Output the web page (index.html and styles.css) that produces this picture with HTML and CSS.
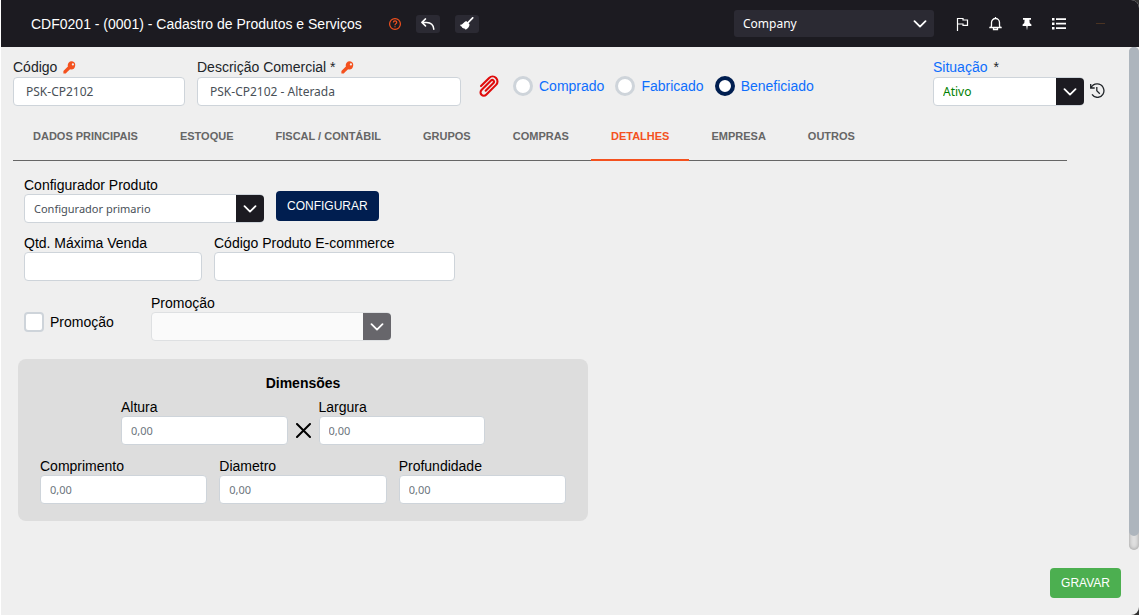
FILE: index.html
```html
<!DOCTYPE html>
<html lang="pt-BR">
<head>
<meta charset="utf-8">
<title>CDF0201 - Cadastro de Produtos e Serviços</title>
<link rel="stylesheet" href="styles.css">
</head>
<body>
<svg class="sprite" aria-hidden="true">
  <symbol id="chevron" viewBox="0 0 14 8"><path d="M1.5 1.2 7 6.6l5.500-5.400" fill="none" stroke="currentColor" stroke-width="1.800" stroke-linecap="round" stroke-linejoin="round"/></symbol>
  <symbol id="key" viewBox="0 0 13 13"><path fill="currentColor" fill-rule="evenodd" d="M9 .3a4 4 0 0 0-4.100 5.100L.4 10v2.600h2.400l1.300-1.500 3-2.800A4 4 0 1 0 9 .3zm.9 2a1.100 1.100 0 1 1 0 2.200 1.100 1.100 0 0 1 0-2.200z"/></symbol>
</svg>
<div class="window">
  <header class="topbar">
    <h1 class="topbar-title">CDF0201 - (0001) - Cadastro de Produtos e Serviços</h1>
    <button class="icon-btn help" type="button" aria-label="Ajuda">
      <svg width="12" height="12" viewBox="0 0 12 12" fill="none" stroke="currentColor" stroke-width="1.200"><circle cx="6" cy="6" r="5.400"/><path d="M4.400 4.600C4.400 2.400 7.700 2.500 7.700 4.400 7.700 5.700 6 5.600 6 7.200M6 8.300v1"/></svg>
    </button>
    <button class="tool-btn back" type="button" aria-label="Voltar">
      <svg width="14" height="12" viewBox="0 0 14 12" fill="none" stroke="currentColor" stroke-width="1.500" stroke-linecap="round" stroke-linejoin="round"><path d="M4.500.9.9 4.400l3.600 3.500M1.200 4.400h4.300c4.200 0 7 2.300 7.300 6.800"/></svg>
    </button>
    <button class="tool-btn" type="button" aria-label="Limpar">
      <svg width="14" height="13" viewBox="0 0 14 13"><path d="M12.700.8 7.800 5.800" stroke="currentColor" stroke-width="1.700" stroke-linecap="round"/><path fill="currentColor" d="M6.200 3.900 9.500 7.200C9.600 9.500 7.800 11.500 5.600 12.800L4.700 11.300 4.200 12 2.900 10.700 2.200 11 1.900 9.800.8 9.300 0 7.800C2.700 7.700 3.700 5 6.200 3.900z"/></svg>
    </button>
    <div class="select-box company">
      <select class="select-company" aria-label="Empresa"><option>Company</option></select>
      <svg class="company-arrow" width="14" height="8"><use href="#chevron"/></svg>
    </div>
    <nav class="topbar-actions" aria-label="Atalhos">
      <button class="icon-btn" type="button" aria-label="Marcar"><svg width="13" height="14" viewBox="0 0 13 14" fill="none" stroke="currentColor" stroke-width="1.200"><path d="M1.500 14V1.500h5.500V3h4.500v5.300H7V7H1.500"/></svg></button>
      <button class="icon-btn" type="button" aria-label="Notificações"><svg width="13" height="14" viewBox="0 0 13 14" fill="none" stroke="currentColor" stroke-width="1.300"><path d="M.3 10.500h12.400M2 10.500l.5-2V5.500a4 4 0 0 1 8 0v3l.5 2M6.500 0v1.500M4.500 11v1.500h4V11"/></svg></button>
      <button class="icon-btn" type="button" aria-label="Fixar"><svg width="10" height="14" viewBox="0 0 10 14" fill="currentColor"><path d="M1 1h8v1.800H7.400L7.700 6 9.400 7.500V9H5.700L5 13.500 4.300 9H.6V7.500L2.300 6l.3-3.200H1z"/></svg></button>
      <button class="icon-btn" type="button" aria-label="Menu"><svg width="14" height="14" viewBox="0 0 14 14" fill="currentColor"><path d="M0 1h2.500v2.400H0zM0 5.500h2.500v2.400H0zM0 10h2.500v2.400H0zM4 1.300h10v1.700H4zM4 5.800h10v1.700H4zM4 10.300h10V12H4z"/></svg></button>
      <span class="brand-dash"></span>
    </nav>
  </header>

  <div class="body-row">
    <main class="content">
      <form id="product" class="record">
        <div class="field w-code">
          <label class="label" for="codigo">Código <svg class="key" width="13" height="13"><use href="#key"/></svg></label>
          <input class="input" id="codigo" value="PSK-CP2102">
        </div>
        <div class="field w-desc">
          <label class="label" for="descricao">Descrição Comercial * <svg class="key" width="13" height="13"><use href="#key"/></svg></label>
          <input class="input" id="descricao" value="PSK-CP2102 - Alterada">
        </div>
        <button class="icon-btn clip" type="button" aria-label="Anexos">
          <svg width="22" height="24" viewBox="-11 -12 22 24" fill="none" stroke="currentColor" stroke-width="2.100" stroke-linecap="round"><path transform="rotate(225)" d="M4.900-5V6.500A4.900 4.900 0 0 1-4.900 6.500V-7.500A3.300 3.300 0 0 1 1.700-7.500V6A1.700 1.700 0 0 1-1.700 6V-5"/></svg>
        </button>
        <div class="radios">
          <label class="radio"><input class="radio-dot" type="radio" name="origem">Comprado</label>
          <label class="radio"><input class="radio-dot" type="radio" name="origem">Fabricado</label>
          <label class="radio"><input class="radio-dot" type="radio" name="origem" checked>Beneficiado</label>
        </div>
        <div class="field w-status">
          <label class="label" for="situacao"><span class="link">Situação</span> *</label>
          <div class="select-box">
            <select class="input select status" id="situacao"><option>Ativo</option></select>
            <span class="arrow"><svg width="14" height="8"><use href="#chevron"/></svg></span>
          </div>
        </div>
        <button class="icon-btn history" type="button" aria-label="Histórico">
          <svg width="15" height="15" viewBox="0 0 15 15" fill="none" stroke="currentColor" stroke-width="1.300"><path d="M.7 1v4h4M1 4.800C3.500-.3 10.500-.2 13 4.200c2.800 5.300-1.300 10.200-5.500 10.200-2.500 0-4.300-1.200-5.500-3M6.800 4v3.800l3 2.900"/></svg>
        </button>
      </form>

      <nav class="tabs" aria-label="Seções">
        <a class="tab" href="#principais">DADOS PRINCIPAIS</a>
        <a class="tab" href="#estoque">ESTOQUE</a>
        <a class="tab" href="#fiscal">FISCAL / CONTÁBIL</a>
        <a class="tab" href="#grupos">GRUPOS</a>
        <a class="tab" href="#compras">COMPRAS</a>
        <a class="tab active" href="#detalhes" aria-current="page">DETALHES</a>
        <a class="tab" href="#empresa">EMPRESA</a>
        <a class="tab" href="#outros">OUTROS</a>
      </nav>

      <section class="details" id="detalhes">
        <div class="row">
          <div class="field w-select">
            <label class="label" for="configurador">Configurador Produto</label>
            <div class="select-box">
              <select class="input select" id="configurador"><option>Configurador primario</option></select>
              <span class="arrow"><svg width="14" height="8"><use href="#chevron"/></svg></span>
            </div>
          </div>
          <button class="btn btn-primary" type="button">CONFIGURAR</button>
        </div>
        <div class="row">
          <div class="field w-qty">
            <label class="label" for="qtd">Qtd. Máxima Venda</label>
            <input class="input" id="qtd">
          </div>
          <div class="field w-ecom">
            <label class="label" for="ecommerce">Código Produto E-commerce</label>
            <input class="input" id="ecommerce">
          </div>
        </div>
        <div class="row promo">
          <label class="check"><input class="check-box" type="checkbox">Promoção</label>
          <div class="field w-select disabled">
            <label class="label" for="promocao">Promoção</label>
            <div class="select-box">
              <select class="input select" id="promocao" disabled><option></option></select>
              <span class="arrow"><svg width="14" height="8"><use href="#chevron"/></svg></span>
            </div>
          </div>
        </div>
      </section>

      <section class="panel">
        <h2 class="panel-title">Dimensões</h2>
        <div class="dims dims-top">
          <div class="field">
            <label class="label" for="altura">Altura</label>
            <input class="input num" id="altura" placeholder="0,00">
          </div>
          <svg class="times" width="15" height="15" viewBox="0 0 15 15"><path d="M1 1l13 13M14 1 1 14" stroke="currentColor" stroke-width="2" stroke-linecap="round"/></svg>
          <div class="field">
            <label class="label" for="largura">Largura</label>
            <input class="input num" id="largura" placeholder="0,00">
          </div>
        </div>
        <div class="dims">
          <div class="field">
            <label class="label" for="comprimento">Comprimento</label>
            <input class="input num" id="comprimento" placeholder="0,00">
          </div>
          <div class="field">
            <label class="label" for="diametro">Diametro</label>
            <input class="input num" id="diametro" placeholder="0,00">
          </div>
          <div class="field">
            <label class="label" for="profundidade">Profundidade</label>
            <input class="input num" id="profundidade" placeholder="0,00">
          </div>
        </div>
      </section>
    </main>
    <div class="scroll-track"><div class="scroll-thumb"></div></div>
  </div>

  <footer class="footer">
    <button class="btn btn-save" type="submit" form="product">GRAVAR</button>
  </footer>
</div>
</body>
</html>
```
FILE: styles.css
```css
* { box-sizing: border-box; }

body {
  margin: 0;
  background: #333;
  color: #000;
  font: 14px/18px "Liberation Sans", Arial, sans-serif;
}

button, input, select { font: inherit; color: inherit; margin: 0; }
button { cursor: pointer; }
svg { display: block; flex: none; }
.sprite { position: absolute; width: 0; height: 0; }

.window {
  display: flex;
  flex-direction: column;
  min-height: 100vh;
  border-left: 1px solid #fff;
  border-radius: 0 8px 8px 0;
  background: #efefef;
  overflow: hidden;
}

/* Top bar */
.topbar {
  display: flex;
  align-items: center;
  height: 47px;
  padding: 0 34px 0 30px;
  background: #1c1b21;
  color: #fff;
}
.topbar-title { margin: 0 27px 0 0; font-size: 14px; font-weight: 400; white-space: nowrap; }
.icon-btn { display: flex; padding: 0; border: 0; background: none; }
.help { margin-right: 15px; color: #f4511e; }
.tool-btn {
  display: grid;
  place-items: center;
  width: 24px;
  height: 18px;
  padding: 0;
  border: 0;
  border-radius: 3px;
  background: #2b2a33;
}
.back { margin-right: 15px; }
.company { width: 200px; margin-left: auto; }
.select-company {
  width: 100%;
  height: 27px;
  padding: 0 34px 0 9px;
  border: 0;
  border-radius: 3px;
  appearance: none;
  background: #2b2a33;
  font: 12px "Noto Sans", sans-serif;
}
.company-arrow { position: absolute; top: 10px; right: 7px; pointer-events: none; }
.topbar-actions { display: flex; align-items: center; gap: 20px; margin-left: 22px; }
.brand-dash { width: 9px; height: 1px; margin-left: 10px; background: #4a3322; }

/* Page body */
.body-row { display: flex; }
.content { flex: 1; min-width: 0; padding: 12px 24px 29px 12px; }
.scroll-track {
  width: 10px;
  padding-bottom: 14px;
  border-radius: 5px;
  background: #e0e0e0;
  box-shadow: inset 0 0 4px #999;
}
.scroll-thumb { height: 100%; border-radius: 5px; background: #adb5bd; }

/* Fields */
.label { display: flex; align-items: center; gap: 6px; white-space: nowrap; }
.key { color: #f4511e; }
.link { color: #0d6efd; }
.input {
  display: block;
  width: 100%;
  height: 29px;
  padding: 0 12px;
  border: 1px solid #ced4da;
  border-radius: 4px;
  background: #fff;
  color: #495057;
  font: 12px "Noto Sans", sans-serif;
}
.num { padding: 0 9px; font-size: 11px; }
.input::placeholder { color: #6c757d; opacity: 1; }
.select-box { position: relative; }
.select { padding: 0 32px 0 9px; appearance: none; opacity: 1; font-size: 11px; }
.status { color: #008000; font-size: 12px; }
.arrow {
  position: absolute;
  top: 1px;
  right: 0;
  bottom: 1px;
  display: grid;
  place-items: center;
  width: 28px;
  border-radius: 0 4px 4px 0;
  background: #1c1b21;
  color: #fff;
  pointer-events: none;
}
.disabled .input { background: #fafafa; border-color: #dee0e2; }
.disabled .arrow { background: #67666b; }

.w-code { width: 172px; }
.w-desc { width: 264px; }
.w-status { width: 151px; margin-left: auto; }
.w-select { width: 240px; }
.w-qty { width: 178px; }
.w-ecom { width: 241px; }

/* Product record line */
.record { display: flex; align-items: flex-start; color: #212529; }
.record .label { margin-bottom: 2px; line-height: 16px; }
.w-code { margin-right: 12px; }
.clip { margin: 15px 14px 0 16px; color: #e00b0b; }
.radios { display: flex; gap: 11px; margin-top: 17px; color: #0d6efd; }
.radio { display: flex; align-items: center; gap: 6px; }
.radio-dot {
  width: 20px;
  height: 20px;
  border: 3px solid #ced4da;
  border-radius: 50%;
  appearance: none;
  background: #fff;
}
.radio-dot:checked { border-color: #001e50; border-width: 4px; }
.history { margin: 24px 0 0 6px; }

/* Tabs */
.tabs {
  display: flex;
  gap: 2px;
  margin: 4px 38px 0 0;
  border-bottom: 1px solid #666;
}
.tab {
  height: 51px;
  margin-bottom: -1px;
  padding: 0 20px;
  border-bottom: 2px solid transparent;
  color: #666;
  font-size: 11px;
  font-weight: 700;
  line-height: 52px;
  text-decoration: none;
  white-space: nowrap;
}
.active { border-color: #f4511e; color: #f4511e; }

/* Details tab */
.details { display: grid; gap: 11px; padding: 15px 11px 18px; }
.row { display: flex; align-items: flex-end; gap: 12px; }
.promo { margin-top: 2px; }
.check { display: flex; align-items: center; gap: 6px; width: 115px; height: 38px; }
.check-box {
  width: 20px;
  height: 20px;
  border: 2px solid #ced4da;
  border-radius: 4px;
  appearance: none;
  background: #fff;
}
.btn {
  height: 30px;
  padding: 0 11px;
  border: 0;
  border-radius: 4px;
  color: #fff;
  font-size: 12px;
}
.btn-primary { margin-bottom: 2px; background: #001e50; }

/* Dimensions panel */
.panel {
  max-width: 570px;
  margin-left: 5px;
  padding: 15px 22px 17px;
  border-radius: 8px;
  background: #ddd;
}
.panel-title { margin: 0 0 6px; font-size: 14px; font-weight: 700; text-align: center; }
.dims { display: grid; grid-template-columns: repeat(3, 1fr); gap: 12px; }
.dims-top {
  grid-template-columns: 1fr 15px 1fr;
  gap: 8px;
  align-items: end;
  margin: 0 81px 12px;
}
.times { margin-bottom: 7px; }

.footer { display: flex; justify-content: flex-end; padding: 18px 18px 17px; }
.btn-save { background: #4caf50; }
```
